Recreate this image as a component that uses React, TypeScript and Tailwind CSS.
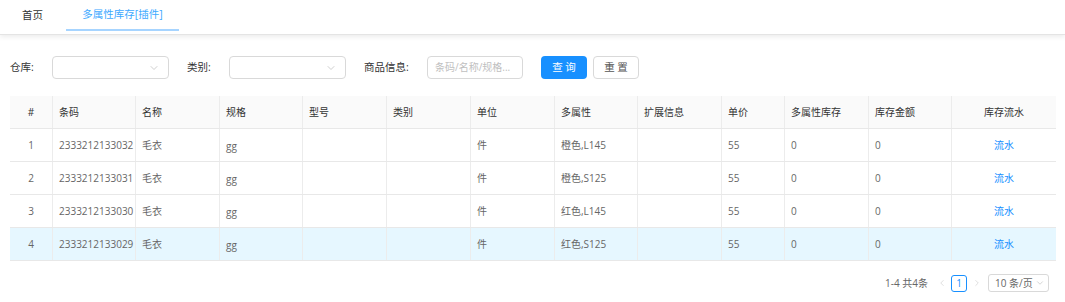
import React from 'react';
import { ChevronDown, ChevronLeft, ChevronRight } from 'lucide-react';

const COLS = [
  { key: 'idx', title: '#', w: 'w-[42px]', center: true },
  { key: 'code', title: '条码', w: 'w-[83px]' },
  { key: 'name', title: '名称', w: 'w-[84px]' },
  { key: 'spec', title: '规格', w: 'w-[83px]' },
  { key: 'model', title: '型号', w: 'w-[84px]' },
  { key: 'cat', title: '类别', w: 'w-[84px]' },
  { key: 'unit', title: '单位', w: 'w-[84px]' },
  { key: 'attr', title: '多属性', w: 'w-[83px]' },
  { key: 'ext', title: '扩展信息', w: 'w-[84px]' },
  { key: 'price', title: '单价', w: 'w-[63px]' },
  { key: 'stock', title: '多属性库存', w: 'w-[84px]' },
  { key: 'amount', title: '库存金额', w: 'w-[83px]' },
  { key: 'flow', title: '库存流水', w: 'w-[105px]', center: true },
];

const ROWS = [
  { idx: '1', code: '2333212133032', attr: '橙色,L145' },
  { idx: '2', code: '2333212133031', attr: '橙色,S125' },
  { idx: '3', code: '2333212133030', attr: '红色,L145' },
  { idx: '4', code: '2333212133029', attr: '红色,S125' },
];

function Select() {
  return (
    <div className="w-[117px] h-[23px] border border-[#d9d9d9] rounded-[4px] bg-white flex items-center justify-end pr-[8px]">
      <ChevronDown className="w-[12px] h-[12px] text-[#bfbfbf]" strokeWidth={1.5} />
    </div>
  );
}

export default function App() {
  return (
    <div className="w-[1065px] h-[302px] bg-white overflow-hidden text-[10px] text-[#666]" style={{ fontFamily: '"Open Sans", "Noto Sans CJK SC", sans-serif' }}>
      {/* tabs */}
      <div className="h-[35px] flex items-start border-b border-[#e4e4e4] shadow-[0_2px_5px_rgba(0,0,0,0.08)] text-[10.5px]">
        <div className="w-[66px] h-[31px] flex items-center justify-center text-[#333] pr-[1px]">首页</div>
        <div className="w-[113px] h-[31px] flex items-center justify-center text-[#40a9ff] border-b-2 border-[#a6d4ff]">多属性库存[插件]</div>
      </div>

      {/* filters */}
      <div className="flex items-center px-[10px] mt-[21px] h-[23px] text-[10.5px]">
        <span className="w-[42px] text-[#333]">仓库:</span>
        <Select />
        <span className="ml-[18px] w-[42px] text-[#333]">类别:</span>
        <Select />
        <span className="ml-[18px] w-[63px] text-[#333]">商品信息:</span>
        <div className="w-[96px] h-[23px] border border-[#d9d9d9] rounded-[4px] flex items-center px-[7px] text-[#c0c0c0] text-[10px] whitespace-nowrap overflow-hidden">条码/名称/规格...</div>
        <button className="ml-[18px] w-[46px] h-[23px] rounded-[4px] bg-[#1890ff] text-white">查 询</button>
        <button className="ml-[6px] w-[46px] h-[23px] rounded-[4px] border border-[#d9d9d9] text-[#555] bg-white">重 置</button>
      </div>

      {/* table */}
      <div className="mx-[10px] mt-[17px] w-[1046px]">
        <div className="flex h-[33px] bg-[#fafafa] border-b border-[#e8e8e8]">
          {COLS.map((c, i) => (
            <div key={c.key} className={`${c.w} flex items-center text-[#333] ${c.center ? 'justify-center' : 'pl-[6px]'} ${i > 0 ? 'border-l border-[#ececec]' : ''}`}>
              {c.title}
            </div>
          ))}
        </div>
        {ROWS.map((r, ri) => (
          <div key={r.idx} className={`flex h-[33px] border-b border-[#e8e8e8] ${ri === 3 ? 'bg-[#e6f7ff]' : 'bg-white'}`}>
            {COLS.map((c, i) => {
              const val: Record<string, string> = {
                idx: r.idx,
                code: r.code,
                name: '毛衣',
                spec: 'gg',
                model: '',
                cat: '',
                unit: '件',
                attr: r.attr,
                ext: '',
                price: '55',
                stock: '0',
                amount: '0',
                flow: '流水',
              };
              return (
                <div key={c.key} className={`${c.w} flex items-center whitespace-nowrap ${c.center ? 'justify-center' : 'pl-[6px]'} ${i > 0 ? 'border-l border-[#ececec]' : ''} ${c.key === 'flow' ? 'text-[#1890ff]' : ''} ${c.key === 'spec' ? 'pt-[2px]' : ''}`}>
                  {val[c.key]}
                </div>
              );
            })}
          </div>
        ))}
      </div>

      {/* pagination */}
      <div className="flex items-center justify-end pr-[16px] mt-[13px] h-[18px] whitespace-nowrap">
        <span className="text-[#666] mr-[9px]">1-4 共4条</span>
        <ChevronLeft className="w-[10px] h-[10px] text-[#ccc]" strokeWidth={1.5} />
        <div className="ml-[4px] w-[16px] h-[17px] border border-[#1890ff] rounded-[3px] flex items-center justify-center text-[#1890ff]">1</div>
        <ChevronRight className="ml-[5px] w-[10px] h-[10px] text-[#ccc]" strokeWidth={1.5} />
        <div className="ml-[6px] w-[61px] h-[18px] border border-[#d9d9d9] rounded-[3px] flex items-center pl-[6px] text-[#666]">
          <span>10 条/页</span>
          <ChevronDown className="ml-[2px] w-[10px] h-[10px] text-[#bbb]" strokeWidth={1.5} />
        </div>
      </div>
    </div>
  );
}
